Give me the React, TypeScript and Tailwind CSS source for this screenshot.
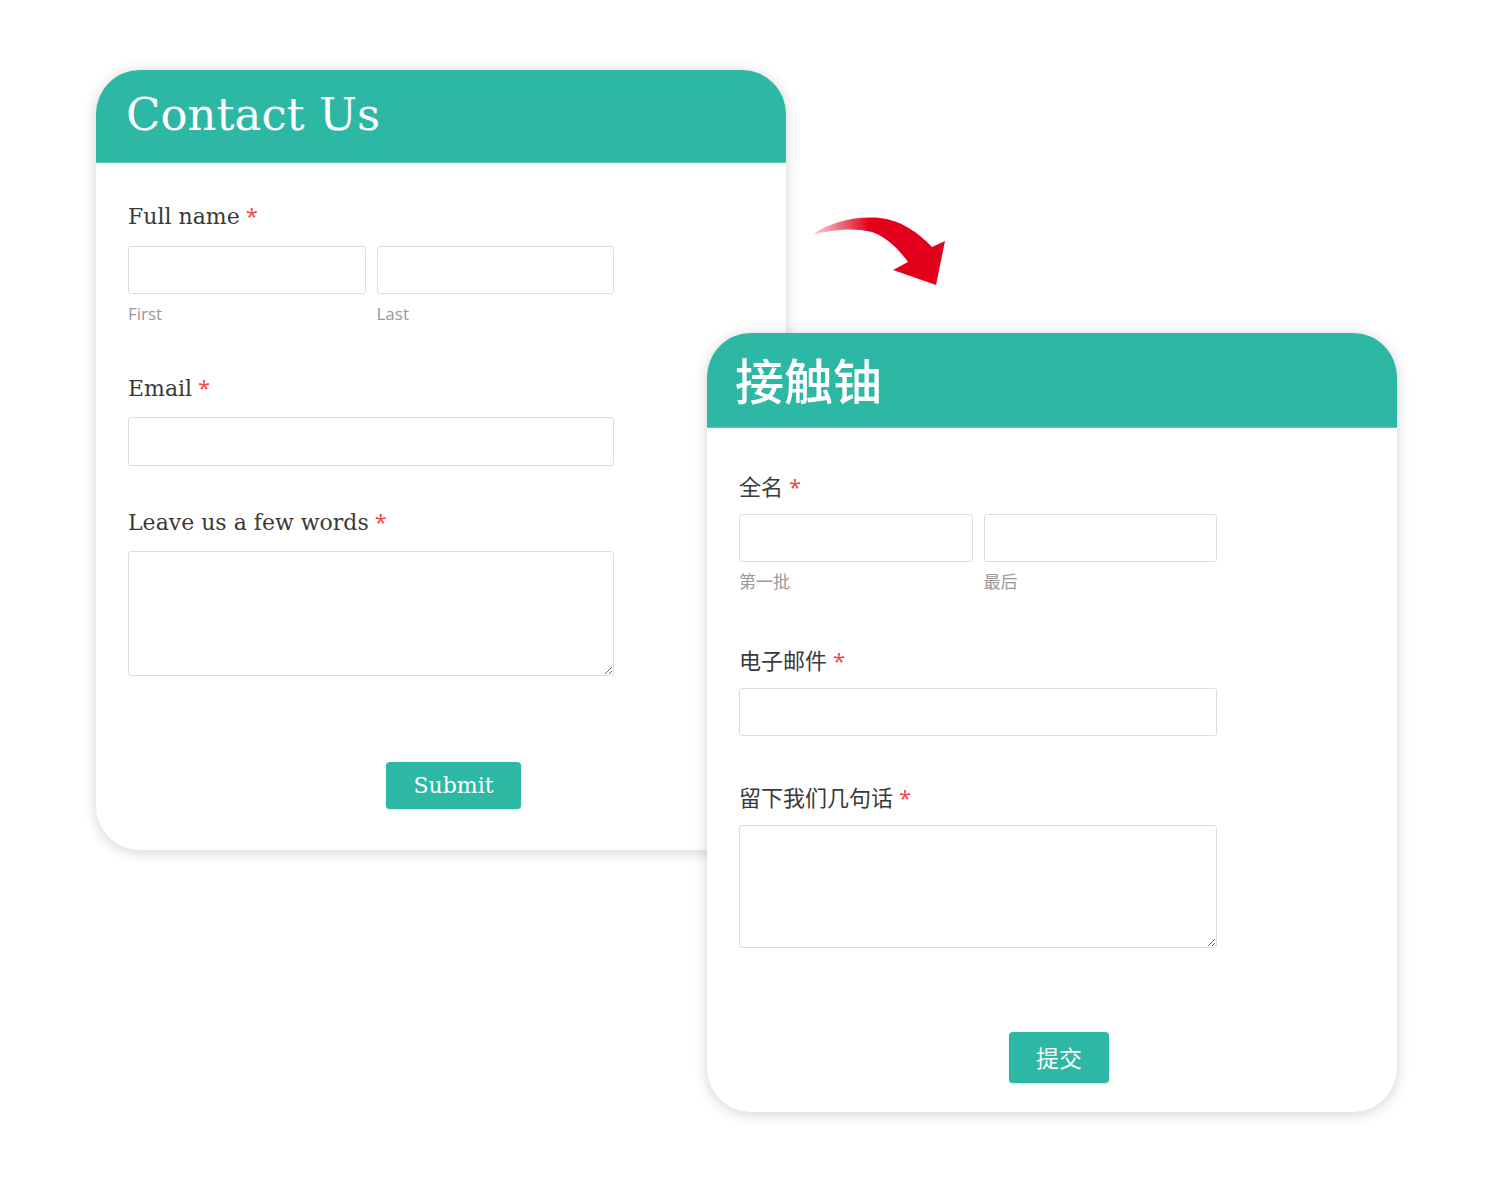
import React from 'react';

const serif = { fontFamily: '"DejaVu Serif", serif' };
const sans = { fontFamily: '"Open Sans", "Noto Sans", sans-serif' };
const cjk = { fontFamily: '"Noto Sans CJK SC", "Noto Sans", sans-serif' };

function Star() {
  return <span className="ml-1.5 leading-none text-[#f24444]" style={sans}>*</span>;
}

function Arrow() {
  return (
    <svg width="160" height="100" viewBox="0 0 160 100" className="absolute left-[800px] top-[200px]">
      <defs>
        <linearGradient id="arrowFade" x1="12" y1="0" x2="100" y2="0" gradientUnits="userSpaceOnUse">
          <stop offset="0" stopColor="#e2001a" stopOpacity="0.15" />
          <stop offset="0.65" stopColor="#e2001a" stopOpacity="1" />
          <stop offset="1" stopColor="#e2001a" stopOpacity="1" />
        </linearGradient>
      </defs>
      <path
        d="M12 35 C30 22 55 16 80 18 C100 20 118 32 132 47 L145 41 L136 85 L93 70 L108 62 C98 48 86 37 72 32 C52 27 30 30 12 35 Z"
        fill="url(#arrowFade)"
      />
    </svg>
  );
}

export default function App() {
  return (
    <div className="relative w-[1500px] h-[1200px] bg-white overflow-hidden">
      {/* English form */}
      <div className="absolute left-[96px] top-[70px] w-[690px] h-[780px] bg-white rounded-[44px] overflow-hidden shadow-[0_2px_14px_rgba(0,0,0,0.18)]">
        <div className="h-[93px] bg-[#2db8a5] border-b border-[#52cbb8] flex items-center px-[30px]">
          <h1 className="text-[45px] text-white leading-none -mt-1" style={serif}>Contact Us</h1>
        </div>
        <div className="pl-[32px] pt-[38px] w-[518px]">
          <label className="block text-[22px] leading-8 text-[#3a3a3a]" style={serif}>
            Full name<Star />
          </label>
          <div className="mt-[13px] flex gap-[11px]">
            <div className="flex-1">
              <input className="w-full h-[48px] border border-[#dedede] rounded-[3px] bg-white" />
              <div className="mt-[8px] text-[17px] leading-6 text-[#999]" style={sans}>First</div>
            </div>
            <div className="flex-1">
              <input className="w-full h-[48px] border border-[#dedede] rounded-[3px] bg-white" />
              <div className="mt-[8px] text-[17px] leading-6 text-[#999]" style={sans}>Last</div>
            </div>
          </div>
          <label className="block mt-[47px] text-[22px] leading-8 text-[#3a3a3a]" style={serif}>
            Email<Star />
          </label>
          <input className="mt-[12px] w-full h-[49px] border border-[#dedede] rounded-[3px] bg-white" />
          <label className="block mt-[41px] text-[22px] leading-8 text-[#3a3a3a]" style={serif}>
            Leave us a few words<Star />
          </label>
          <textarea className="block mt-[12px] w-full h-[125px] border border-[#dedede] rounded-[3px] bg-white" />
          <button className="mt-[86px] ml-[258px] w-[135px] h-[47px] rounded-[4px] bg-[#2db8a5] text-white text-[22px] shadow-[0_1px_2px_rgba(0,0,0,0.15)]" style={serif}>
            Submit
          </button>
        </div>
      </div>

      <Arrow />

      {/* Chinese form */}
      <div className="absolute left-[707px] top-[333px] w-[690px] h-[779px] bg-white rounded-[44px] overflow-hidden shadow-[0_2px_14px_rgba(0,0,0,0.18)]">
        <div className="h-[95px] bg-[#2db8a5] border-b border-[#52cbb8] flex items-center px-[28px]">
          <h1 className="text-[49px] font-medium text-white leading-none -mt-1" style={cjk}>接触铀</h1>
        </div>
        <div className="pl-[32px] pt-[41px] w-[510px]">
          <label className="block text-[22px] leading-8 text-[#3a3a3a]" style={cjk}>
            全名<Star />
          </label>
          <div className="mt-[13px] flex gap-[11px]">
            <div className="flex-1">
              <input className="w-full h-[48px] border border-[#dedede] rounded-[3px] bg-white" />
              <div className="mt-[8px] text-[17px] leading-[22px] text-[#999]" style={cjk}>第一批</div>
            </div>
            <div className="flex-1">
              <input className="w-full h-[48px] border border-[#dedede] rounded-[3px] bg-white" />
              <div className="mt-[8px] text-[17px] leading-[22px] text-[#999]" style={cjk}>最后</div>
            </div>
          </div>
          <label className="block mt-[51px] text-[22px] leading-8 text-[#3a3a3a]" style={cjk}>
            电子邮件<Star />
          </label>
          <input className="mt-[13px] w-full h-[48px] border border-[#dedede] rounded-[3px] bg-white" />
          <label className="block mt-[44px] text-[22px] leading-8 text-[#3a3a3a]" style={cjk}>
            留下我们几句话<Star />
          </label>
          <textarea className="block mt-[13px] w-full h-[123px] border border-[#dedede] rounded-[3px] bg-white" />
          <button className="mt-[84px] ml-[270px] w-[100px] h-[51px] rounded-[4px] bg-[#2db8a5] text-white text-[23px] shadow-[0_1px_2px_rgba(0,0,0,0.15)]" style={cjk}>
            提交
          </button>
        </div>
      </div>
    </div>
  );
}
